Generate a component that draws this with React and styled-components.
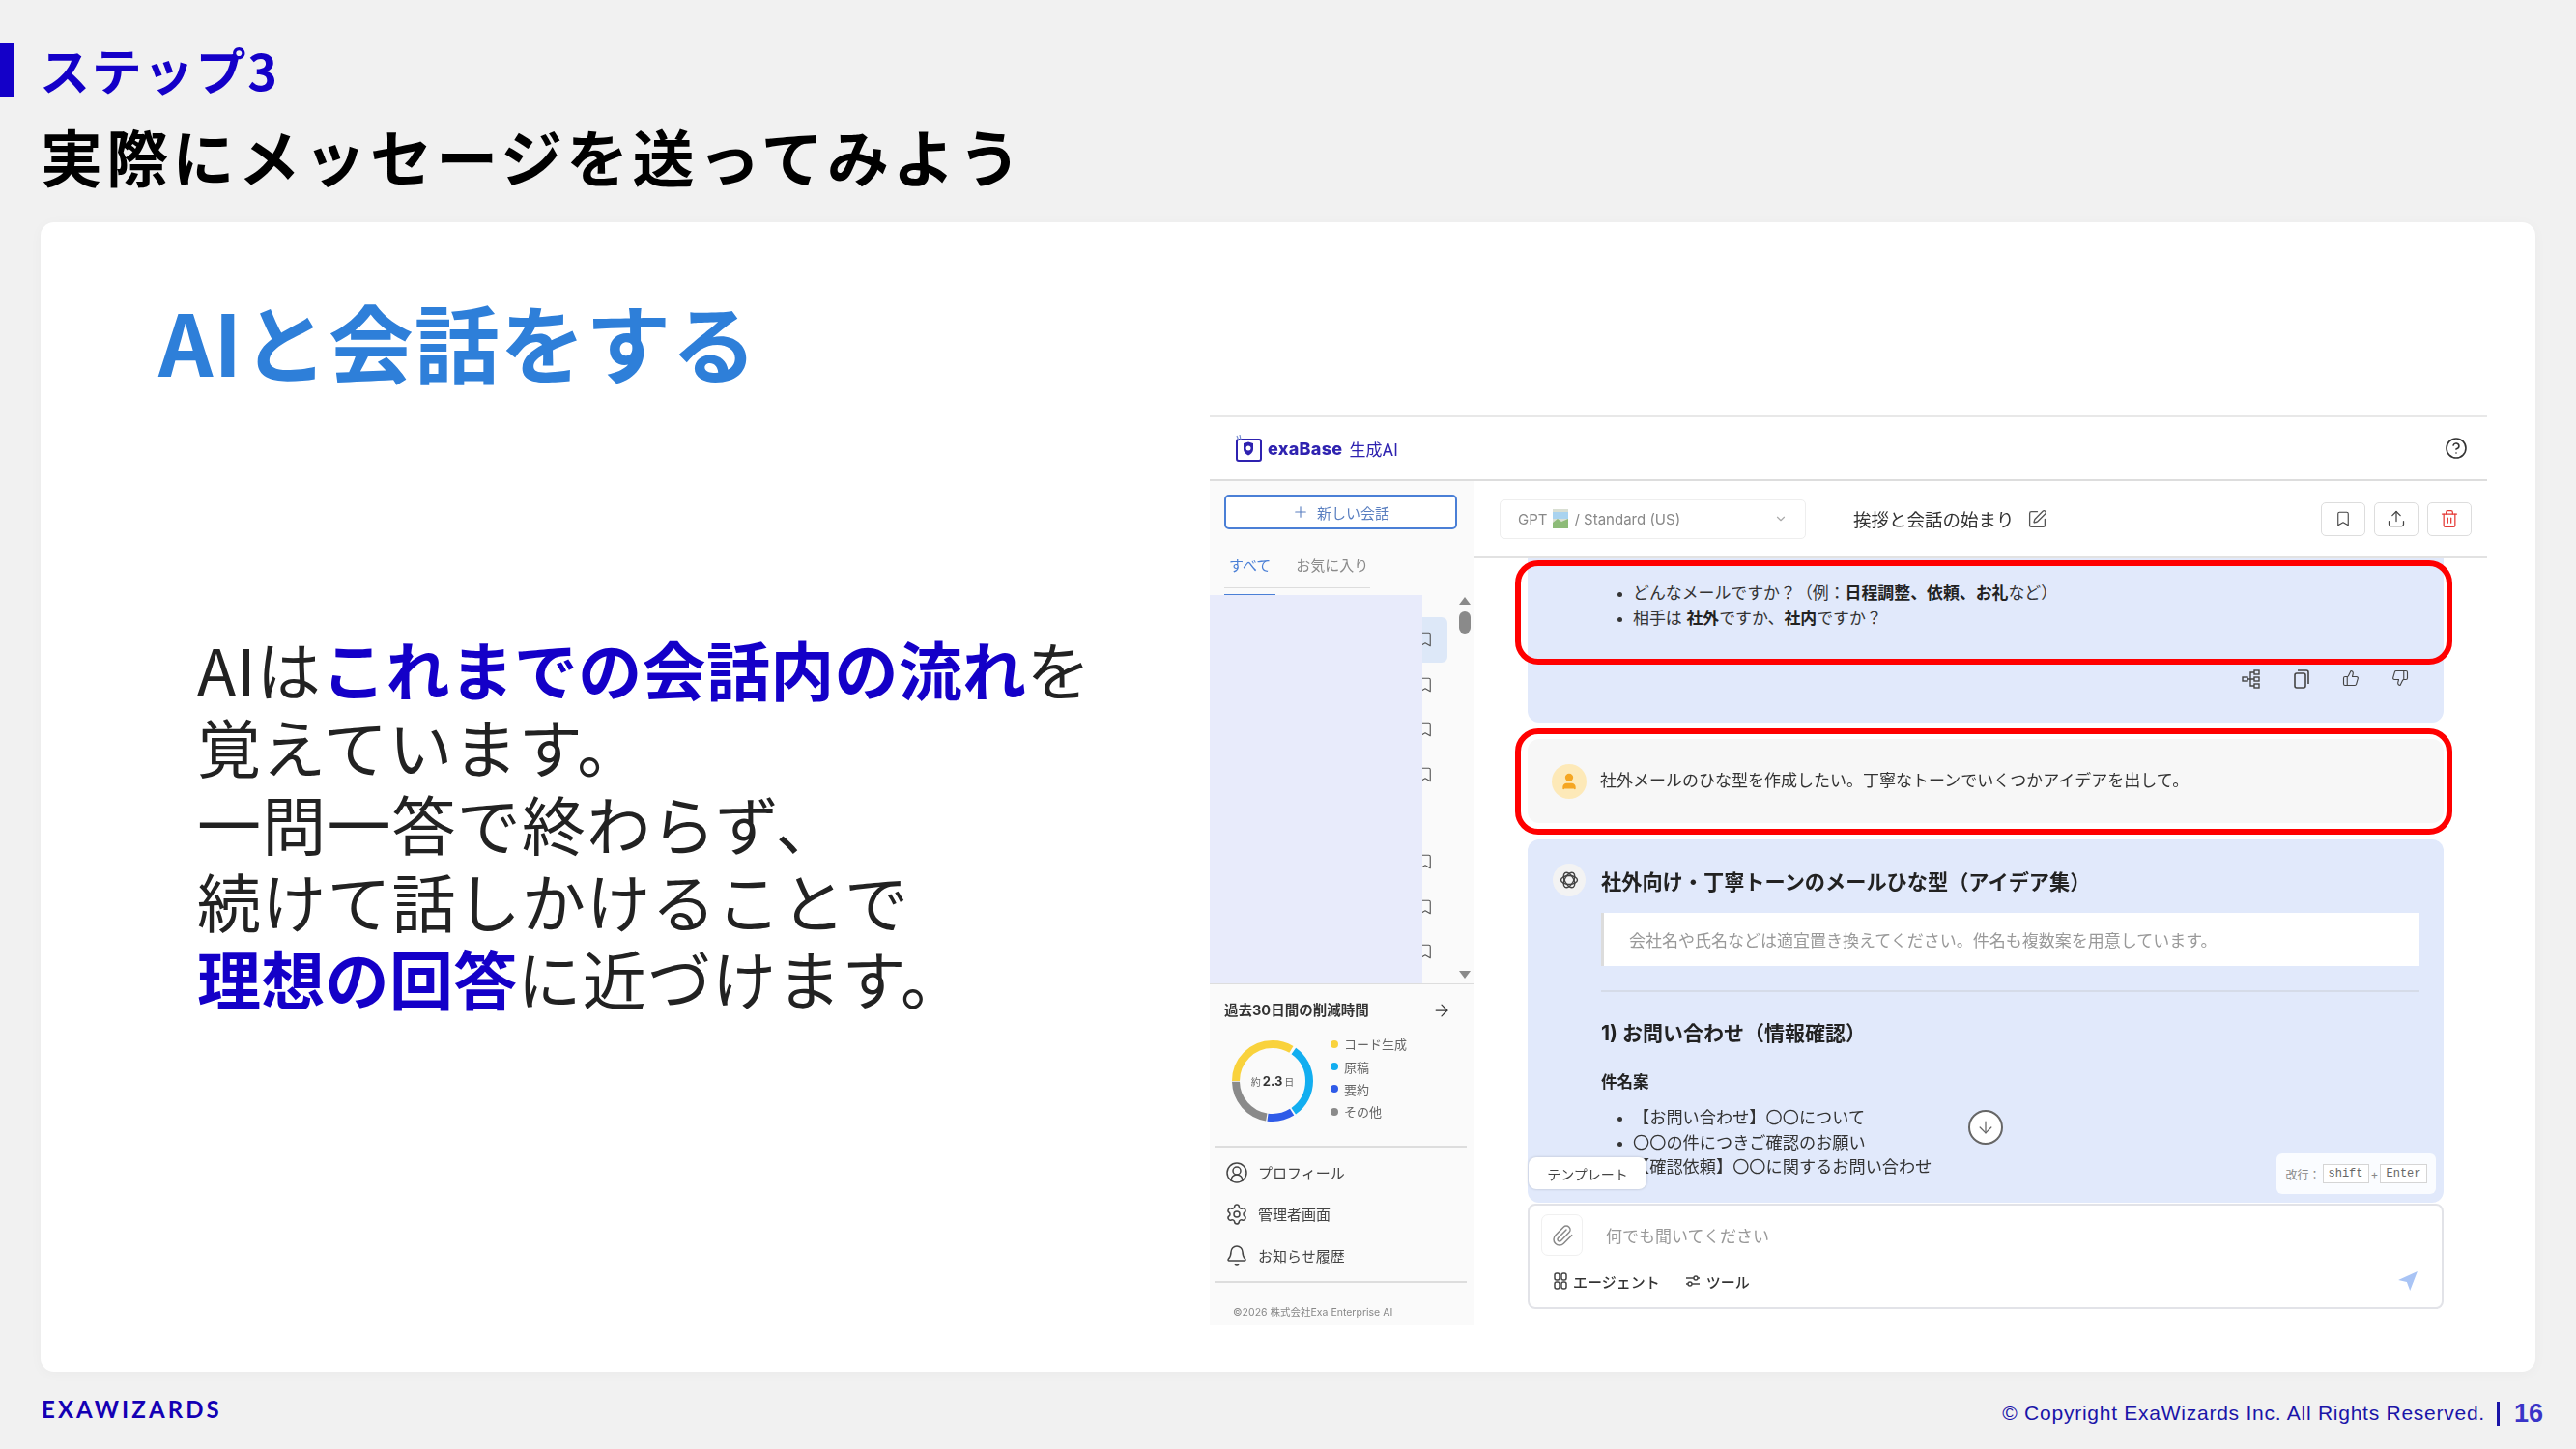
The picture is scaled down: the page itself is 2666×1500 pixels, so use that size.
import React from "react";
import styled, { createGlobalStyle } from "styled-components";
import {
  Bookmark, Upload, Trash2, SquarePen, CircleHelp, Plus, ChevronDown, ArrowRight,
  CircleUserRound, Bell, Paperclip, ArrowDown, ThumbsUp, ThumbsDown, User, Settings,
} from "lucide-react";

const JP = `"Noto Sans CJK JP", "Noto Sans", sans-serif`;
const UI = `Inter, "Noto Sans CJK JP", sans-serif`;

const Global = createGlobalStyle`
  html, body { margin: 0; padding: 0; background: #f1f1f1; }
  * { box-sizing: border-box; }
`;

const Page = styled.div`
  width: 2666px; height: 1500px; background: #f1f1f1; font-family: ${JP};
  display: flex; flex-direction: column; overflow: hidden;
`;
const SlideHead = styled.header`
  height: 230px; padding-top: 44px; display: flex; flex-direction: column;
`;
const StepRow = styled.div`display: flex; align-items: center; gap: 27px; height: 56px;`;
const StepBar = styled.div`width: 14px; height: 56px; background: #1400c8;`;
const StepLabel = styled.div`
  font-size: 52px; font-weight: 700; line-height: 56px; color: #1400c8; letter-spacing: 1.8px;
`;
const Title = styled.h1`
  margin: 18px 0 0 42px; font-size: 64px; font-weight: 700; color: #000;
  line-height: 84px; letter-spacing: 4.2px;
`;
const Card = styled.main`
  margin: 0 42px; width: 2582px; height: 1190px; background: #fff; border-radius: 14px;
  box-shadow: 0 2px 14px rgba(0,0,0,.03);
  display: flex; padding-right: 50px;
`;
const Left = styled.section`flex: 1; padding-left: 122px; display: flex; flex-direction: column;`;
const Heading = styled.h2`
  margin: 63px 0 0; font-size: 88px; line-height: 118px; font-weight: 700; color: #2e7fd9; letter-spacing: .8px;
`;
const Lead = styled.p`
  margin: 240px 0 0 40px; font-size: 66px; line-height: 80px; font-weight: 400; color: #222;
  letter-spacing: 1.2px; white-space: nowrap;
  b { font-weight: 700; color: #1400c8; letter-spacing: .3px; }
`;
const Embed = styled.div`
  width: 1322px; height: 942px; margin-top: 200px; position: relative;
  border-top: 2px solid #e8e8e8; display: flex; flex-direction: column;
  font-family: ${UI}; color: #333; filter: blur(.35px);
`;
const TopBar = styled.div`
  height: 66px; border-bottom: 2px solid #ddd; display: flex; align-items: center;
  justify-content: space-between; padding: 0 20px 0 26px; flex: none;
`;
const LogoWrap = styled.div`display: flex; align-items: center; gap: 6px;`;
const LogoName = styled.span`font-size: 18px; font-weight: 800; color: #2e22b0; letter-spacing: .3px;`;
const LogoSub = styled.span`font-size: 17px; font-weight: 400; color: #2e22b0; margin-left: 1px;`;
const AppBody = styled.div`display: flex; flex: 1; min-height: 0;`;
const Sidebar = styled.aside`
  width: 274px; background: #fafafa; display: flex; flex-direction: column; flex: none;
`;
const NewButton = styled.div`
  margin: 14px 18px 0 15px; height: 36px; border: 2px solid #4a7fd6; border-radius: 5px;
  display: flex; align-items: center; justify-content: center; gap: 8px;
  font-size: 15px; color: #5a7fc0; background: #fff;
`;
const Tabs = styled.div`
  margin: 24px 0 0 15px; width: 151px; height: 37px; display: flex; gap: 26px; padding-left: 5px;
  border-bottom: 1px solid #ddd; position: relative; font-size: 15px; line-height: 28px;
`;
const Tab = styled.span`
  color: ${p => (p.$active ? "#4a7fd6" : "#8a8a8a")};
  position: relative;
  ${p => p.$active && `&::after{content:"";position:absolute;left:-5px;right:-5px;bottom:-9px;height:2px;background:#4a7fd6;}`}
`;
const ChatList = styled.div`
  height: 403px; margin-top: 7px; border-bottom: 1px solid #ddd; position: relative; padding-top: 23px; flex: none;
`;
const ListItem = styled.div`
  height: 46.5px; width: 246px; display: flex; align-items: center; justify-content: flex-end;
  padding-right: 14px; border-radius: 6px; background: ${p => (p.$on ? "#dde8f8" : "transparent")};
  margin-bottom: ${p => p.$gap || 0}px; color: #555;
`;
const Mask = styled.div`
  position: absolute; left: 0; top: 0; bottom: 0; width: 220px; background: #e8ebfb;
`;
const Scroll = styled.div`
  position: absolute; left: 258px; top: 0; bottom: 0; width: 12px;
`;
const ScrollUp = styled.div`
  position: absolute; top: 2px; left: 0; border: 6px solid transparent; border-top: 0; border-bottom: 8px solid #8a8a8a;
`;
const ScrollThumb = styled.div`
  position: absolute; top: 17px; left: 0; width: 12px; height: 23px; border-radius: 6px; background: #8a8a8a;
`;
const ScrollDown = styled.div`
  position: absolute; bottom: 5px; left: 0; border: 6px solid transparent; border-bottom: 0; border-top: 8px solid #8a8a8a;
`;
const Stats = styled.div`padding: 17px 24px 0 15px; height: 167px; flex: none;`;
const StatsHead = styled.div`
  display: flex; justify-content: space-between; align-items: center; font-size: 14.5px; font-weight: 700; color: #333; line-height: 20px;
`;
const StatsBody = styled.div`display: flex; margin-top: 10px; padding-left: 8px; gap: 18px;`;
const Donut = styled.div`width: 84px; height: 84px; position: relative; margin-top: 11px; flex: none;`;
const DonutLabel = styled.div`
  position: absolute; inset: 0; display: flex; align-items: center; justify-content: center; gap: 2px;
  font-size: 10px; color: #666;
  b { font-size: 13px; color: #333; }
`;
const Legend = styled.ul`margin: 3px 0 0; padding: 0; list-style: none; font-size: 13px; color: #666;`;
const LegendItem = styled.li`
  display: flex; align-items: center; gap: 6px; height: 23.4px;
  &::before { content: ""; width: 8px; height: 8px; border-radius: 50%; background: ${p => p.$c}; }
`;
const Menu = styled.nav`
  margin: 0 8px 0 5px; border-top: 2px solid #ddd; border-bottom: 2px solid #ddd; height: 142px;
  padding-top: 4px; flex: none;
`;
const MenuItem = styled.div`
  height: 43px; display: flex; align-items: center; gap: 10px; padding-left: 11px; font-size: 15px; color: #444;
`;
const Copy = styled.div`padding: 22px 0 0 24px; font-size: 10.5px; color: #888;`;

const Main = styled.div`flex: 1; display: flex; flex-direction: column; min-width: 0; background: #fff;`;
const MainHead = styled.div`
  height: 80px; border-bottom: 2px solid #e2e2e2; display: flex; align-items: center; padding: 0 16px 0 26px; flex: none;
`;
const Select = styled.div`
  width: 317px; height: 41px; border: 1px solid #eee; border-radius: 5px; display: flex; align-items: center;
  gap: 6px; padding: 0 18px; font-size: 15px; color: #888;
`;
const ChatTitle = styled.div`
  margin-left: 49px; font-size: 18.5px; color: #333; display: flex; align-items: center; gap: 13px; flex: 1;
`;
const Tools = styled.div`display: flex; gap: 9px;`;
const ToolBtn = styled.div`
  width: 46px; height: 35px; border: 1px solid #ddd; border-radius: 5px; display: flex; align-items: center; justify-content: center;
  color: ${p => p.$c || "#444"};
`;
const Chat = styled.div`
  flex: 1; position: relative; padding: 0 45px 0 55px; display: flex; flex-direction: column; min-height: 0;
`;
const Bubble = styled.div`
  background: ${p => p.$bg || "#e1e9fb"}; border-radius: ${p => p.$r || "12px"}; flex: none; height: ${p => p.$h}px;
  margin-top: ${p => p.$mt || 0}px; position: relative;
`;
const BubbleOne = styled(Bubble)`padding: 24px 0 0 92px;`;
const Bullets = styled.ul`
  margin: ${p => p.$m || 0}; padding: 0 0 0 ${p => p.$pad || 17}px; font-size: ${p => p.$fs || 16.9}px; line-height: 25.5px; color: #333;
  b { font-weight: 700; color: #222; }
  li::marker { font-size: 14px; }
`;
const Actions = styled.div`
  position: absolute; top: 115px; right: 36px; display: flex; gap: 33px; color: #444;
`;
const UserBubble = styled(Bubble)`display: flex; align-items: center; padding-left: 25px; gap: 14px; font-size: 17px; color: #333;`;
const UserText = styled.span`margin-top: -4px;`;
const Avatar = styled.div`
  width: ${p => p.$s || 36}px; height: ${p => p.$s || 36}px; border-radius: 50%; background: ${p => p.$bg};
  display: flex; align-items: center; justify-content: center; flex: none;
`;
const AnswerHead = styled.div`
  display: flex; align-items: center; gap: 16px; padding: 25px 0 0 26px; font-size: 21.2px; font-weight: 700; color: #222;
`;
const AnswerBody = styled.div`padding: 17px 25px 0 76px;`;
const Quote = styled.div`
  height: 55px; background: #fff; border-left: 3px solid #dcdcdc; display: flex; align-items: center; padding-left: 26px;
  font-size: 17px; color: #999;
`;
const Rule = styled.div`height: 2px; background: #d5dbe8; margin-top: 25px;`;
const H3 = styled.div`margin-top: 28px; font-size: 21px; line-height: 30px; font-weight: 700; color: #222;`;
const H4 = styled.div`margin-top: 23px; font-size: 16.5px; line-height: 24px; font-weight: 700; color: #222;`;
const DownBtn = styled.div`
  position: absolute; left: 456px; top: 280px; width: 36px; height: 36px; border-radius: 50%; border: 2px solid #666; background: #fff;
  display: flex; align-items: center; justify-content: center; color: #666;
`;
const TemplateTab = styled.div`
  position: absolute; left: 1px; top: 329px; width: 122px; height: 33px; background: #fff; border-radius: 8px;
  box-shadow: 0 0 3px rgba(0,0,0,.2); display: flex; align-items: center; justify-content: center; font-size: 14px; color: #444;
`;
const Hint = styled.div`
  position: absolute; right: 8px; top: 325px; width: 165px; height: 42px; background: #fafcff; border-radius: 6px;
  display: flex; align-items: center; justify-content: center; gap: 2px; font-size: 12px; color: #888;
`;
const Key = styled.span`
  font-family: "Liberation Mono", monospace; font-size: 12px; border: 1px solid #d5d5d5; padding: 2px 5px; color: #666; background: #fff; line-height: 14px;
`;
const Input = styled.div`
  height: 109px; margin-top: 1px; background: #fff; border: 2px solid #e2e3e8; border-radius: 8px; position: relative; flex: none;
  display: flex; flex-direction: column; padding: 9px 14px 0 12px;
`;
const InputTop = styled.div`display: flex; align-items: center; gap: 24px; font-size: 17px; color: #999;`;
const Attach = styled.div`
  width: 43px; height: 43px; border: 1px solid #f0f0f0; border-radius: 7px; display: flex; align-items: center; justify-content: center; color: #888;
`;
const InputBottom = styled.div`
  display: flex; align-items: center; margin-top: 15px; font-size: 15px; color: #333; font-weight: 500; padding: 0 10px 0 13px; height: 22px;
`;
const Pill = styled.span`display: inline-flex; align-items: center; gap: 6px; margin-right: 26px;`;
const Send = styled.span`margin-left: auto; display: flex;`;
const RedBox = styled.div`
  position: absolute; left: 42px; width: 970px; top: ${p => p.$t}px; height: ${p => p.$h}px;
  border: 6px solid #f00; border-radius: 24px;
`;
const Foot = styled.footer`
  flex: 1; display: flex; align-items: center; justify-content: space-between; padding: 0 34px 4px 43px;
`;
const Brand = styled.div`
  font-family: Lato, sans-serif; font-weight: 700; font-size: 24px; letter-spacing: 3.1px; color: #1400b4;
`;
const FootRight = styled.div`display: flex; align-items: center; padding-top: 10px;`;
const Legal = styled.span`
  font-family: "Liberation Sans", sans-serif; font-size: 21px; letter-spacing: .75px; color: #1a14a8;
`;
const Sep = styled.span`width: 3px; height: 25px; background: #1a14a8; margin: 0 15px 0 12px;`;
const PageNo = styled.span`font-family: "Liberation Sans", sans-serif; font-weight: 700; font-size: 27px; color: #3a34c8;`;

const Logo = () => (
  <svg width="28" height="28" viewBox="0 0 28 28" fill="none">
    <rect x="2" y="5" width="25" height="22" rx="2" stroke="#2e22b0" strokeWidth="2" fill="#fff" />
    <path d="M9 9l5-1.500L19 9v6c0 3-2.500 5.500-5 6.500C11.500 20.500 9 18 9 15z" fill="#2e22b0" />
    <circle cx="14" cy="14" r="2.500" fill="#fff" />
    <path d="M2 1l2 5M5 0l1 5" stroke="#7a8fd0" strokeWidth="1.200" />
  </svg>
);
const Flow = () => (
  <svg width="20" height="20" viewBox="0 0 20 20" fill="none" stroke="#444" strokeWidth="1.400">
    <rect x="1" y="8" width="5" height="4" /><rect x="13" y="1" width="5" height="4" />
    <rect x="13" y="8" width="5" height="4" /><rect x="13" y="15" width="5" height="4" />
    <path d="M6 10h7M9 10V3h4M9 10v7h4" />
  </svg>
);
const CopyIcon = () => (
  <svg width="18" height="20" viewBox="0 0 18 20" fill="none" stroke="#444" strokeWidth="1.600">
    <rect x="2" y="4" width="11" height="15" rx="2" /><path d="M5 1h9a2 2 0 0 1 2 2v12" />
  </svg>
);
const Knot = () => (
  <svg width="20" height="20" viewBox="0 0 20 20" fill="none" stroke="#444" strokeWidth="1.400">
    {[0, 60, 120].map(a => <ellipse key={a} cx="10" cy="10" rx="8.500" ry="4.500" transform={`rotate(${a} 10 10)`} />)}
  </svg>
);
const Agent = () => (
  <svg width="14" height="18" viewBox="0 0 14 18" fill="none" stroke="#444" strokeWidth="1.500">
    <rect x="1" y="1" width="5" height="7" rx="2" /><rect x="8" y="1" width="5" height="7" rx="2" />
    <rect x="1" y="10" width="5" height="7" rx="2" /><rect x="8" y="10" width="5" height="7" rx="2" />
  </svg>
);
const SlideIcon = () => (
  <svg width="16" height="14" viewBox="0 0 16 14" fill="none" stroke="#444" strokeWidth="1.400">
    <path d="M1 4h8M13 4h2M1 10h2M7 10h8" /><circle cx="11" cy="4" r="2" /><circle cx="5" cy="10" r="2" />
  </svg>
);
const Plane = () => (
  <svg width="22" height="22" viewBox="0 0 20 20"><path d="M19 1L1 9l8 2 3 8z" fill="#a9c4f5" /></svg>
);
const Pic = () => (
  <svg width="16" height="20" viewBox="0 0 16 20">
    <rect width="16" height="20" fill="#d9dfd3" /><rect y="3" width="16" height="7" fill="#a9d3ef" /><path d="M0 14l5-4 4 3 7-3v10H0z" fill="#8dbb78" />
  </svg>
);

const Ring = () => {
  const r = 38, c = 2 * Math.PI * r;
  const segs = [
    ["#f9d23c", 0.0, 0.335], ["#12aef0", 0.347, 0.305], ["#2f5be8", 0.66, 0.11], ["#8a8a8a", 0.775, 0.22],
  ];
  return (
    <svg width="84" height="84" viewBox="0 0 84 84" fill="none">
      {segs.map(([col, start, len]) => (
        <circle key={col} cx="42" cy="42" r={r} stroke={col} strokeWidth="8" strokeDasharray={`${len * c} ${c}`}
          strokeDashoffset={-start * c} transform="rotate(-180 42 42)" />
      ))}
    </svg>
  );
};

const Mark = () => <Bookmark size={18} strokeWidth={1.5} />;

export default function App() {
  return (
    <Page>
      <Global />
      <SlideHead>
        <StepRow><StepBar /><StepLabel>ステップ3</StepLabel></StepRow>
        <Title>実際にメッセージを送ってみよう</Title>
      </SlideHead>
      <Card>
        <Left>
          <Heading>AIと会話をする</Heading>
          <Lead>
            AIは<b>これまでの会話内の流れ</b>を<br />
            覚えています。<br />
            一問一答で終わらず、<br />
            続けて話しかけることで<br />
            <b>理想の回答</b>に近づけます。
          </Lead>
        </Left>
        <Embed>
          <TopBar>
            <LogoWrap><Logo /><LogoName>exaBase</LogoName><LogoSub>生成AI</LogoSub></LogoWrap>
            <CircleHelp size={24} color="#333" strokeWidth={1.6} />
          </TopBar>
          <AppBody>
            <Sidebar>
              <NewButton><Plus size={18} strokeWidth={1.5} />新しい会話</NewButton>
              <Tabs><Tab $active>すべて</Tab><Tab>お気に入り</Tab></Tabs>
              <ChatList>
                <ListItem $on><Mark /></ListItem>
                <ListItem><Mark /></ListItem>
                <ListItem><Mark /></ListItem>
                <ListItem $gap={44}><Mark /></ListItem>
                <ListItem><Mark /></ListItem>
                <ListItem><Mark /></ListItem>
                <ListItem><Mark /></ListItem>
                <Mask />
                <Scroll><ScrollUp /><ScrollThumb /><ScrollDown /></Scroll>
              </ChatList>
              <Stats>
                <StatsHead>過去30日間の削減時間<ArrowRight size={20} strokeWidth={1.5} /></StatsHead>
                <StatsBody>
                  <Donut><Ring /><DonutLabel>約<b>2.3</b>日</DonutLabel></Donut>
                  <Legend>
                    <LegendItem $c="#f9d23c">コード生成</LegendItem>
                    <LegendItem $c="#12aef0">原稿</LegendItem>
                    <LegendItem $c="#2f5be8">要約</LegendItem>
                    <LegendItem $c="#8a8a8a">その他</LegendItem>
                  </Legend>
                </StatsBody>
              </Stats>
              <Menu>
                <MenuItem><CircleUserRound size={24} strokeWidth={1.5} />プロフィール</MenuItem>
                <MenuItem><Settings size={24} strokeWidth={1.5} />管理者画面</MenuItem>
                <MenuItem><Bell size={24} strokeWidth={1.5} />お知らせ履歴</MenuItem>
              </Menu>
              <Copy>©2026 株式会社Exa Enterprise AI</Copy>
            </Sidebar>
            <Main>
              <MainHead>
                <Select>GPT <Pic /> / Standard (US)<ChevronDown size={14} color="#aaa" style={{ marginLeft: "auto" }} /></Select>
                <ChatTitle>挨拶と会話の始まり<SquarePen size={21} strokeWidth={1.5} color="#555" /></ChatTitle>
                <Tools>
                  <ToolBtn><Mark /></ToolBtn>
                  <ToolBtn><Upload size={20} strokeWidth={1.5} /></ToolBtn>
                  <ToolBtn $c="#e53935"><Trash2 size={20} strokeWidth={1.5} /></ToolBtn>
                </Tools>
              </MainHead>
              <Chat>
                <BubbleOne $h={170} $r="0 0 12px 12px">
                  <Bullets>
                    <li>どんなメールですか？（例：<b>日程調整、依頼、お礼</b>など）</li>
                    <li>相手は <b>社外</b>ですか、<b>社内</b>ですか？</li>
                  </Bullets>
                  <Actions>
                    <Flow /><CopyIcon /><ThumbsUp size={18} strokeWidth={1.5} /><ThumbsDown size={18} strokeWidth={1.5} />
                  </Actions>
                </BubbleOne>
                <UserBubble $mt={17} $h={87} $bg="#f7f7f7">
                  <Avatar $bg="#fde9b8"><User size={20} color="#f5a623" fill="#f5a623" /></Avatar>
                  <UserText>社外メールのひな型を作成したい。丁寧なトーンでいくつかアイデアを出して。</UserText>
                </UserBubble>
                <Bubble $mt={17} $h={376}>
                  <AnswerHead>
                    <Avatar $s={34} $bg="#f3f3f3"><Knot /></Avatar>
                    社外向け・丁寧トーンのメールひな型（アイデア集）
                  </AnswerHead>
                  <AnswerBody>
                    <Quote>会社名や氏名などは適宜置き換えてください。件名も複数案を用意しています。</Quote>
                    <Rule />
                    <H3>1) お問い合わせ（情報確認）</H3>
                    <H4>件名案</H4>
                    <Bullets $m="12px 0 0" $pad={33} $fs={17.2}>
                      <li>【お問い合わせ】〇〇について</li>
                      <li>〇〇の件につきご確認のお願い</li>
                      <li>【確認依頼】〇〇に関するお問い合わせ</li>
                    </Bullets>
                  </AnswerBody>
                  <DownBtn><ArrowDown size={20} strokeWidth={1.5} /></DownBtn>
                  <TemplateTab>テンプレート</TemplateTab>
                  <Hint>改行：<Key>shift</Key>+<Key>Enter</Key></Hint>
                </Bubble>
                <Input>
                  <InputTop>
                    <Attach><Paperclip size={24} strokeWidth={1.5} /></Attach>
                    何でも聞いてください
                  </InputTop>
                  <InputBottom>
                    <Pill><Agent />エージェント</Pill>
                    <Pill><SlideIcon />ツール</Pill>
                    <Send><Plane /></Send>
                  </InputBottom>
                </Input>
                <RedBox $t={2} $h={108} />
                <RedBox $t={176} $h={110} />
              </Chat>
            </Main>
          </AppBody>
        </Embed>
      </Card>
      <Foot>
        <Brand>EXAWIZARDS</Brand>
        <FootRight>
          <Legal>© Copyright ExaWizards Inc. All Rights Reserved.</Legal>
          <Sep />
          <PageNo>16</PageNo>
        </FootRight>
      </Foot>
    </Page>
  );
}
